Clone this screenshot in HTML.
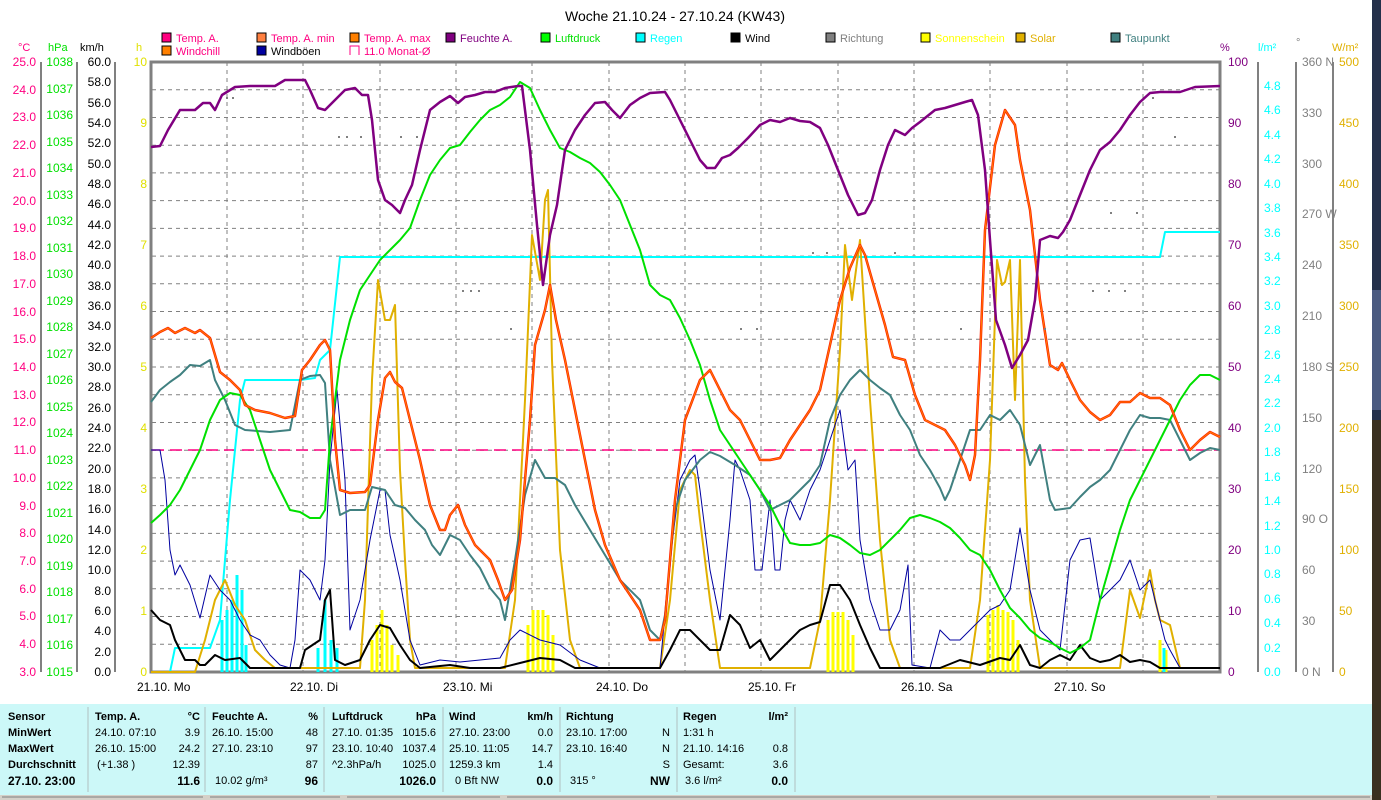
<!DOCTYPE html>
<html><head><meta charset="utf-8"><style>
body{margin:0;width:1381px;height:800px;background:#fff;overflow:hidden;position:relative;font-family:"Liberation Sans",sans-serif}
svg{position:absolute;left:0;top:0}
.t{position:absolute;font-size:11px;white-space:nowrap;line-height:13px}
.b{font-weight:bold}
.r{text-align:right}
</style></head><body>
<svg width="1381" height="800" font-family="Liberation Sans, sans-serif" font-size="12">
<text x="675" y="21" text-anchor="middle" font-size="14">Woche 21.10.24 - 27.10.24 (KW43)</text>
<!-- legend -->
<g font-size="11">
<rect x="162" y="33" width="9" height="9" fill="#ff0080" stroke="#000"/><text x="176" y="42" fill="#ff0080">Temp. A.</text>
<rect x="257" y="33" width="9" height="9" fill="#ff8040" stroke="#000"/><text x="271" y="42" fill="#ff0080">Temp. A. min</text>
<rect x="350" y="33" width="9" height="9" fill="#ff8000" stroke="#000"/><text x="364" y="42" fill="#ff0080">Temp. A. max</text>
<rect x="446" y="33" width="9" height="9" fill="#800080" stroke="#000"/><text x="460" y="42" fill="#800080">Feuchte A.</text>
<rect x="541" y="33" width="9" height="9" fill="#00ff00" stroke="#000"/><text x="555" y="42" fill="#00e000">Luftdruck</text>
<rect x="636" y="33" width="9" height="9" fill="#00ffff" stroke="#000"/><text x="650" y="42" fill="#00ffff">Regen</text>
<rect x="731" y="33" width="9" height="9" fill="#000" stroke="#000"/><text x="745" y="42">Wind</text>
<rect x="826" y="33" width="9" height="9" fill="#808080" stroke="#000"/><text x="840" y="42" fill="#808080">Richtung</text>
<rect x="921" y="33" width="9" height="9" fill="#ffff00" stroke="#000"/><text x="935" y="42" fill="#ffff00">Sonnenschein</text>
<rect x="1016" y="33" width="9" height="9" fill="#e0b000" stroke="#000"/><text x="1030" y="42" fill="#e0b000">Solar</text>
<rect x="1111" y="33" width="9" height="9" fill="#408080" stroke="#000"/><text x="1125" y="42" fill="#408080">Taupunkt</text>
<rect x="162" y="46" width="9" height="9" fill="#ff8000" stroke="#000"/><text x="176" y="55" fill="#ff0080">Windchill</text>
<rect x="257" y="46" width="9" height="9" fill="#0000a0" stroke="#000"/><text x="271" y="55">Windböen</text>
<path d="M350 55V46h9v9" fill="none" stroke="#ff0080"/><text x="364" y="55" fill="#ff0080">11.0 Monat-Ø</text>
</g>
<!-- axis titles -->
<text x="18" y="51" fill="#ff0080" font-size="11">°C</text>
<text x="48" y="51" fill="#00e000" font-size="11">hPa</text>
<text x="80" y="51" font-size="11">km/h</text>
<text x="136" y="51" fill="#e0e000" font-size="11">h</text>
<text x="1220" y="51" fill="#800080" font-size="11">%</text>
<text x="1258" y="51" fill="#00ffff" font-size="11">l/m²</text>
<text x="1296" y="46" fill="#808080" font-size="11">°</text>
<text x="1332" y="51" fill="#e0b000" font-size="11">W/m²</text>
<!-- axis lines -->
<g stroke="#808080" stroke-width="2" fill="none">
<path d="M41 62V672M77 62V672M115 62V672M1258 62V672M1296 62V672M1333 62V672"/>
</g>
<!-- grid -->
<g stroke="#808080" stroke-dasharray="4,4" stroke-width="1">
<path d="M152 89.7H1220M152 117.5H1220M152 145.2H1220M152 172.9H1220M152 200.6H1220M152 228.4H1220M152 256.1H1220M152 283.8H1220M152 311.5H1220M152 339.3H1220M152 367H1220M152 394.7H1220M152 422.5H1220M152 450.2H1220M152 477.9H1220M152 505.6H1220M152 533.4H1220M152 561.1H1220M152 588.8H1220M152 616.5H1220M152 644.3H1220"/>
<path d="M227 62V672M303 62V672M380 62V672M456 62V672M532 62V672M609 62V672M685 62V672M761 62V672M838 62V672M914 62V672M990 62V672M1067 62V672M1143 62V672"/>
</g>
<rect x="151" y="62" width="1069" height="610" fill="none" stroke="#808080" stroke-width="3"/>
<!-- temp labels -->
<g fill="#ff0080" text-anchor="end" font-size="12">
<text x="36" y="66">25.0</text><text x="36" y="94">24.0</text><text x="36" y="121">23.0</text><text x="36" y="149">22.0</text><text x="36" y="177">21.0</text><text x="36" y="205">20.0</text><text x="36" y="232">19.0</text><text x="36" y="260">18.0</text><text x="36" y="288">17.0</text><text x="36" y="316">16.0</text><text x="36" y="343">15.0</text><text x="36" y="371">14.0</text><text x="36" y="399">13.0</text><text x="36" y="426">12.0</text><text x="36" y="454">11.0</text><text x="36" y="482">10.0</text><text x="36" y="510">9.0</text><text x="36" y="537">8.0</text><text x="36" y="565">7.0</text><text x="36" y="593">6.0</text><text x="36" y="620">5.0</text><text x="36" y="648">4.0</text><text x="36" y="676">3.0</text>
</g>
<g fill="#00e000" text-anchor="end" font-size="12">
<text x="73" y="66">1038</text><text x="73" y="93">1037</text><text x="73" y="119">1036</text><text x="73" y="146">1035</text><text x="73" y="172">1034</text><text x="73" y="199">1033</text><text x="73" y="225">1032</text><text x="73" y="252">1031</text><text x="73" y="278">1030</text><text x="73" y="305">1029</text><text x="73" y="331">1028</text><text x="73" y="358">1027</text><text x="73" y="384">1026</text><text x="73" y="411">1025</text><text x="73" y="437">1024</text><text x="73" y="464">1023</text><text x="73" y="490">1022</text><text x="73" y="517">1021</text><text x="73" y="543">1020</text><text x="73" y="570">1019</text><text x="73" y="596">1018</text><text x="73" y="623">1017</text><text x="73" y="649">1016</text><text x="73" y="676">1015</text>
</g>
<g text-anchor="end" font-size="12">
<text x="111" y="66">60.0</text><text x="111" y="86">58.0</text><text x="111" y="107">56.0</text><text x="111" y="127">54.0</text><text x="111" y="147">52.0</text><text x="111" y="168">50.0</text><text x="111" y="188">48.0</text><text x="111" y="208">46.0</text><text x="111" y="229">44.0</text><text x="111" y="249">42.0</text><text x="111" y="269">40.0</text><text x="111" y="290">38.0</text><text x="111" y="310">36.0</text><text x="111" y="330">34.0</text><text x="111" y="351">32.0</text><text x="111" y="371">30.0</text><text x="111" y="391">28.0</text><text x="111" y="412">26.0</text><text x="111" y="432">24.0</text><text x="111" y="452">22.0</text><text x="111" y="473">20.0</text><text x="111" y="493">18.0</text><text x="111" y="513">16.0</text><text x="111" y="534">14.0</text><text x="111" y="554">12.0</text><text x="111" y="574">10.0</text><text x="111" y="595">8.0</text><text x="111" y="615">6.0</text><text x="111" y="635">4.0</text><text x="111" y="656">2.0</text><text x="111" y="676">0.0</text>
</g>
<g fill="#e0e000" text-anchor="end" font-size="12">
<text x="147" y="66">10</text><text x="147" y="127">9</text><text x="147" y="188">8</text><text x="147" y="249">7</text><text x="147" y="310">6</text><text x="147" y="371">5</text><text x="147" y="432">4</text><text x="147" y="493">3</text><text x="147" y="554">2</text><text x="147" y="615">1</text><text x="147" y="676">0</text>
</g>
<g fill="#800080" font-size="12">
<text x="1228" y="66">100</text><text x="1228" y="127">90</text><text x="1228" y="188">80</text><text x="1228" y="249">70</text><text x="1228" y="310">60</text><text x="1228" y="371">50</text><text x="1228" y="432">40</text><text x="1228" y="493">30</text><text x="1228" y="554">20</text><text x="1228" y="615">10</text><text x="1228" y="676">0</text>
</g>
<g fill="#00ffff" font-size="12">
<text x="1264" y="90">4.8</text><text x="1264" y="114">4.6</text><text x="1264" y="139">4.4</text><text x="1264" y="163">4.2</text><text x="1264" y="188">4.0</text><text x="1264" y="212">3.8</text><text x="1264" y="237">3.6</text><text x="1264" y="261">3.4</text><text x="1264" y="285">3.2</text><text x="1264" y="310">3.0</text><text x="1264" y="334">2.8</text><text x="1264" y="359">2.6</text><text x="1264" y="383">2.4</text><text x="1264" y="407">2.2</text><text x="1264" y="432">2.0</text><text x="1264" y="456">1.8</text><text x="1264" y="481">1.6</text><text x="1264" y="505">1.4</text><text x="1264" y="530">1.2</text><text x="1264" y="554">1.0</text><text x="1264" y="578">0.8</text><text x="1264" y="603">0.6</text><text x="1264" y="627">0.4</text><text x="1264" y="652">0.2</text><text x="1264" y="676">0.0</text>
</g>
<g fill="#808080" font-size="12">
<text x="1302" y="66">360 N</text><text x="1302" y="117">330</text><text x="1302" y="168">300</text><text x="1302" y="218">270 W</text><text x="1302" y="269">240</text><text x="1302" y="320">210</text><text x="1302" y="371">180 S</text><text x="1302" y="422">150</text><text x="1302" y="473">120</text><text x="1302" y="523">90  O</text><text x="1302" y="574">60</text><text x="1302" y="625">30</text><text x="1302" y="676">0    N</text>
</g>
<g fill="#e0b000" font-size="12">
<text x="1339" y="66">500</text><text x="1339" y="127">450</text><text x="1339" y="188">400</text><text x="1339" y="249">350</text><text x="1339" y="310">300</text><text x="1339" y="371">250</text><text x="1339" y="432">200</text><text x="1339" y="493">150</text><text x="1339" y="554">100</text><text x="1339" y="615">50</text><text x="1339" y="676">0</text>
</g>
<!-- x labels -->
<g font-size="12">
<text x="137" y="691">21.10.  Mo</text><text x="290" y="691">22.10.  Di</text><text x="443" y="691">23.10.  Mi</text><text x="596" y="691">24.10.  Do</text><text x="748" y="691">25.10.  Fr</text><text x="901" y="691">26.10.  Sa</text><text x="1054" y="691">27.10.  So</text>
</g>
<!-- bars -->
<g stroke="#ffff00" stroke-width="3">
<path d="M372 672V640M377 672V625M382 672V610M387 672V625M392 672V645M398 672V655M528 672V625M533 672V610M538 672V610M543 672V610M548 672V615M553 672V635M828 672V620M833 672V612M838 672V612M843 672V612M848 672V620M853 672V635M988 672V615M993 672V610M998 672V605M1003 672V610M1008 672V612M1013 672V620M1018 672V640M1160 672V640M1166 672V650"/>
</g>
<g stroke="#00ffff" stroke-width="3">
<path d="M222 672V620M227 672V610M232 672V600M237 672V575M242 672V590M246 672V645M318 672V648M325 672V600M331 672V640M337 672V648M1164 672V648"/>
</g>
<line x1="152" y1="450" x2="1220" y2="450" stroke="#ff0080" stroke-dasharray="12,6" stroke-width="1.5"/>
<!-- curves -->
<g fill="none" stroke-linejoin="round">
<polyline stroke="#00ffff" stroke-width="2" points="151,672 170,672 175,648 210,648 220,620 230,500 240,400 245,380 300,380 315,378 320,360 330,350 340,257 1160,257 1165,232 1220,232"/>
<polyline stroke="#e0b000" stroke-width="2" points="151,672 195,672 205,640 215,600 225,580 235,605 245,620 255,650 265,660 275,668 360,668 365,600 372,380 378,280 385,320 390,320 395,305 400,470 405,560 410,640 415,668 505,668 515,600 525,400 532,235 540,280 545,200 548,190 552,360 560,550 570,640 580,668 660,668 670,600 680,490 690,470 695,475 700,520 710,600 720,668 810,668 820,620 830,500 840,350 845,245 852,300 860,240 870,400 880,540 890,640 900,668 970,668 980,600 990,460 997,260 1002,285 1005,282 1010,260 1015,400 1020,260 1025,480 1030,600 1040,668 1120,668 1130,590 1140,618 1150,570 1155,600 1160,620 1170,625 1180,668 1220,668"/>
<polyline stroke="#0000a0" stroke-width="1" points="151,450 160,450 165,480 170,550 175,575 180,565 190,585 200,618 210,575 220,590 230,600 240,620 250,635 260,640 270,655 280,665 290,668 295,640 300,570 310,580 320,600 325,560 330,460 337,390 345,480 350,630 360,600 370,540 380,490 385,490 390,535 400,580 410,640 420,665 440,660 460,662 480,660 500,658 510,640 520,630 540,640 560,645 580,660 600,668 660,668 670,560 680,480 690,460 695,455 700,490 710,570 720,620 730,520 735,460 740,470 750,500 755,570 762,570 770,500 775,570 780,570 785,520 790,500 800,520 810,490 815,480 820,470 830,440 840,410 848,470 855,460 860,540 870,600 880,630 890,630 900,610 908,565 912,665 930,668 940,630 950,640 960,640 970,630 980,620 990,610 1000,605 1010,590 1020,528 1030,590 1040,630 1050,640 1060,650 1070,560 1080,540 1090,538 1100,600 1110,590 1120,580 1130,560 1140,590 1150,580 1160,620 1165,640 1170,650 1180,668 1220,668"/>
<polyline stroke="#000" stroke-width="2" points="151,610 160,620 170,625 175,640 185,660 195,660 200,665 205,665 215,655 225,660 240,658 250,668 300,668 305,650 320,640 325,600 330,590 335,660 345,665 360,660 370,640 380,625 390,628 400,645 410,660 420,668 450,665 470,668 500,668 520,663 540,658 560,660 575,668 660,668 670,650 680,630 690,630 700,640 710,650 720,650 730,615 740,625 750,648 760,640 770,660 780,650 790,640 800,630 810,625 820,622 830,585 840,585 850,600 860,625 870,648 880,668 940,668 960,660 980,665 1000,658 1010,660 1020,645 1030,665 1040,668 1050,660 1060,655 1070,660 1080,645 1090,658 1100,662 1110,660 1120,655 1130,662 1140,660 1150,662 1160,668 1220,668"/>
<polyline stroke="#408080" stroke-width="2" points="151,402 160,390 170,382 180,375 190,365 200,366 210,360 215,380 225,400 235,425 245,430 270,432 290,430 300,380 310,376 320,375 325,383 330,460 340,515 350,510 365,510 372,487 385,490 395,505 405,508 415,520 425,530 432,545 440,555 450,535 460,540 470,555 480,568 490,588 500,600 505,620 515,560 525,495 535,460 545,478 555,478 565,485 575,505 590,530 605,555 620,580 640,600 650,630 660,640 665,615 675,510 685,480 700,460 710,452 720,456 735,465 750,475 760,490 770,510 780,505 790,500 800,490 810,480 820,465 830,420 840,395 850,380 860,370 870,380 880,388 890,395 900,415 910,430 920,455 930,470 940,488 945,500 950,490 960,460 970,430 980,430 990,415 1000,420 1010,410 1020,425 1030,465 1040,445 1050,500 1055,510 1070,508 1080,497 1090,487 1100,480 1110,470 1120,450 1130,430 1140,415 1150,418 1160,418 1170,420 1180,440 1190,460 1200,453 1210,448 1220,450"/>
<polyline stroke="#00e000" stroke-width="2" points="151,523 160,515 170,505 180,490 190,470 200,450 210,420 220,400 230,393 240,395 250,410 260,440 270,470 280,490 290,510 300,512 310,518 320,518 325,510 330,440 340,360 350,320 360,290 370,275 380,260 390,250 400,240 410,228 420,200 430,175 440,160 450,148 460,145 470,132 480,120 490,110 500,105 510,97 520,82 530,88 540,110 550,130 560,148 570,152 580,158 590,163 600,172 610,185 620,200 630,225 640,250 650,285 660,295 670,300 680,318 690,340 700,365 710,400 720,430 730,445 740,460 750,475 760,490 770,505 780,525 790,543 800,545 810,545 820,543 830,535 840,538 850,545 860,553 870,555 880,550 890,540 900,530 910,518 920,515 930,518 940,522 950,528 960,538 970,550 980,555 990,570 1000,590 1010,608 1020,618 1030,630 1040,638 1050,642 1060,648 1070,653 1080,648 1090,640 1100,600 1110,565 1120,530 1130,500 1140,480 1150,460 1160,440 1170,420 1180,400 1190,385 1200,375 1210,375 1220,380"/>
<polyline stroke="#ff2000" stroke-width="2.5" points="151,338 160,332 168,328 175,333 185,328 195,333 200,330 210,338 220,372 230,380 240,390 245,405 255,410 270,413 285,418 295,416 302,370 310,360 320,345 325,340 330,350 335,440 340,490 350,493 365,492 370,485 378,420 385,378 390,372 395,382 402,388 410,420 420,460 430,505 440,530 445,530 450,515 458,505 465,525 475,545 490,560 498,580 505,600 512,590 520,540 530,420 535,345 545,310 550,285 556,320 565,360 575,410 585,460 595,510 605,545 620,580 640,610 650,640 660,640 665,620 675,500 685,420 700,380 710,370 720,390 730,410 740,420 750,440 760,460 770,460 780,458 790,440 800,425 810,410 820,390 830,345 840,300 850,268 860,245 865,255 875,290 885,325 893,357 905,360 915,395 925,420 935,425 945,430 955,445 965,465 970,480 975,455 980,360 985,230 995,145 1005,110 1015,125 1020,160 1030,210 1040,300 1050,365 1058,370 1062,363 1070,380 1080,400 1090,412 1100,420 1110,415 1120,402 1130,402 1140,393 1150,398 1160,398 1170,405 1180,430 1190,450 1200,440 1210,432 1220,437"/>
<polyline stroke="#ff8000" stroke-width="1" points="151,338 160,332 168,328 175,333 185,328 195,333 200,330 210,338 220,372 230,380 240,390 245,405 255,410 270,413 285,418 295,416 302,370 310,360 320,345 325,340 330,350 335,440 340,490 350,493 365,492 370,485 378,420 385,378 390,372 395,382 402,388 410,420 420,460 430,505 440,530 445,530 450,515 458,505 465,525 475,545 490,560 498,580 505,600 512,590 520,540 530,420 535,345 545,310 550,285 556,320 565,360 575,410 585,460 595,510 605,545 620,580 640,610 650,640 660,640 665,620 675,500 685,420 700,380 710,370 720,390 730,410 740,420 750,440 760,460 770,460 780,458 790,440 800,425 810,410 820,390 830,345 840,300 850,268 860,245 865,255 875,290 885,325 893,357 905,360 915,395 925,420 935,425 945,430 955,445 965,465 970,480 975,455 980,360 985,230 995,145 1005,110 1015,125 1020,160 1030,210 1040,300 1050,365 1058,370 1062,363 1070,380 1080,400 1090,412 1100,420 1110,415 1120,402 1130,402 1140,393 1150,398 1160,398 1170,405 1180,430 1190,450 1200,440 1210,432 1220,437"/>
<polyline stroke="#800080" stroke-width="2.5" points="151,147 160,146 168,130 180,110 195,110 203,103 210,103 215,110 222,95 235,87 250,86 275,86 285,80 305,80 310,90 318,108 325,110 335,100 345,90 355,88 362,95 368,95 372,120 378,180 385,200 392,205 400,213 405,200 412,185 420,150 430,110 440,102 450,96 458,103 465,97 475,95 485,92 495,92 505,88 518,86 522,86 530,150 537,225 543,285 550,235 557,205 565,150 575,130 585,115 595,103 605,102 612,110 620,118 630,105 640,98 650,93 665,92 670,100 680,120 690,140 700,160 707,168 715,168 722,158 730,155 738,148 748,138 760,125 770,120 780,122 790,118 800,121 810,122 820,128 828,145 838,170 848,195 858,215 865,213 872,200 880,170 888,145 895,130 905,135 912,128 920,122 925,118 935,110 945,108 955,105 965,102 972,100 978,115 985,170 990,240 996,320 1005,345 1012,368 1020,355 1028,340 1035,300 1040,240 1050,236 1058,238 1063,232 1070,220 1080,195 1090,170 1100,150 1110,142 1120,130 1130,115 1140,102 1150,93 1160,92 1180,92 1195,87 1220,86"/>
</g>
<!-- direction dots -->
<g fill="#808080">
<rect x="226" y="97" width="2" height="2"/><rect x="232" y="97" width="2" height="2"/><rect x="338" y="136" width="2" height="2"/><rect x="346" y="136" width="2" height="2"/><rect x="360" y="136" width="2" height="2"/><rect x="400" y="136" width="2" height="2"/><rect x="416" y="136" width="2" height="2"/><rect x="462" y="290" width="2" height="2"/><rect x="470" y="290" width="2" height="2"/><rect x="478" y="290" width="2" height="2"/><rect x="510" y="328" width="2" height="2"/><rect x="740" y="328" width="2" height="2"/><rect x="756" y="328" width="2" height="2"/><rect x="812" y="252" width="2" height="2"/><rect x="826" y="252" width="2" height="2"/><rect x="894" y="252" width="2" height="2"/><rect x="1092" y="290" width="2" height="2"/><rect x="1108" y="290" width="2" height="2"/><rect x="1124" y="290" width="2" height="2"/><rect x="1152" y="97" width="2" height="2"/><rect x="1110" y="212" width="2" height="2"/><rect x="1136" y="212" width="2" height="2"/><rect x="1174" y="136" width="2" height="2"/><rect x="960" y="328" width="2" height="2"/><rect x="1044" y="328" width="2" height="2"/>
</g>
<!-- table bg -->
<rect x="0" y="704" width="1372" height="92" fill="#ccf8f8"/>
<g stroke="#b0c0c0" stroke-width="1"><path d="M88 707V792M205 707V792M324 707V792M443 707V792M560 707V792M677 707V792M795 707V792"/></g>
<rect x="0" y="795" width="1372" height="5" fill="#d4d0c8"/>
<path d="M2 797H203M210 797H340M347 797H500M507 797H1210M1217 797H1370" stroke="#808080" stroke-width="1"/>
<rect x="1372" y="0" width="9" height="800" fill="#24304a"/>
<rect x="1372" y="290" width="9" height="120" fill="#4a5a80"/>
<rect x="1372" y="420" width="9" height="380" fill="#3a3020"/>
</svg>
<div class="t b" style="left:8px;top:711px">Sensor</div>
<div class="t b" style="left:8px;top:727px">MinWert</div>
<div class="t b" style="left:8px;top:743px">MaxWert</div>
<div class="t b" style="left:8px;top:759px">Durchschnitt</div>
<div class="t b" style="left:8px;top:775px;font-size:12px">27.10. 23:00</div>

<div class="t b" style="left:95px;top:711px">Temp. A.</div><div class="t b r" style="left:150px;width:50px;top:711px">°C</div>
<div class="t" style="left:95px;top:727px">24.10.  07:10</div><div class="t r" style="left:150px;width:50px;top:727px">3.9</div>
<div class="t" style="left:95px;top:743px">26.10.  15:00</div><div class="t r" style="left:150px;width:50px;top:743px">24.2</div>
<div class="t" style="left:97px;top:759px">(+1.38 )</div><div class="t r" style="left:150px;width:50px;top:759px">12.39</div>
<div class="t b r" style="left:150px;width:50px;top:775px;font-size:12px">11.6</div>

<div class="t b" style="left:212px;top:711px">Feuchte A.</div><div class="t b r" style="left:268px;width:50px;top:711px">%</div>
<div class="t" style="left:212px;top:727px">26.10.  15:00</div><div class="t r" style="left:268px;width:50px;top:727px">48</div>
<div class="t" style="left:212px;top:743px">27.10.  23:10</div><div class="t r" style="left:268px;width:50px;top:743px">97</div>
<div class="t r" style="left:268px;width:50px;top:759px">87</div>
<div class="t" style="left:215px;top:775px">10.02 g/m³</div><div class="t b r" style="left:268px;width:50px;top:775px;font-size:12px">96</div>

<div class="t b" style="left:332px;top:711px">Luftdruck</div><div class="t b r" style="left:386px;width:50px;top:711px">hPa</div>
<div class="t" style="left:332px;top:727px">27.10.  01:35</div><div class="t r" style="left:386px;width:50px;top:727px">1015.6</div>
<div class="t" style="left:332px;top:743px">23.10.  10:40</div><div class="t r" style="left:386px;width:50px;top:743px">1037.4</div>
<div class="t" style="left:332px;top:759px">^2.3hPa/h</div><div class="t r" style="left:386px;width:50px;top:759px">1025.0</div>
<div class="t b r" style="left:376px;width:60px;top:775px;font-size:12px">1026.0</div>

<div class="t b" style="left:449px;top:711px">Wind</div><div class="t b r" style="left:503px;width:50px;top:711px">km/h</div>
<div class="t" style="left:449px;top:727px">27.10.  23:00</div><div class="t r" style="left:503px;width:50px;top:727px">0.0</div>
<div class="t" style="left:449px;top:743px">25.10.  11:05</div><div class="t r" style="left:503px;width:50px;top:743px">14.7</div>
<div class="t" style="left:449px;top:759px">1259.3 km</div><div class="t r" style="left:503px;width:50px;top:759px">1.4</div>
<div class="t" style="left:455px;top:775px">0 Bft NW</div><div class="t b r" style="left:503px;width:50px;top:775px;font-size:12px">0.0</div>

<div class="t b" style="left:566px;top:711px">Richtung</div>
<div class="t" style="left:566px;top:727px">23.10.  17:00</div><div class="t r" style="left:620px;width:50px;top:727px">N</div>
<div class="t" style="left:566px;top:743px">23.10.  16:40</div><div class="t r" style="left:620px;width:50px;top:743px">N</div>
<div class="t r" style="left:620px;width:50px;top:759px">S</div>
<div class="t" style="left:570px;top:775px">315 °</div><div class="t b r" style="left:620px;width:50px;top:775px;font-size:12px">NW</div>

<div class="t b" style="left:683px;top:711px">Regen</div><div class="t b r" style="left:738px;width:50px;top:711px">l/m²</div>
<div class="t" style="left:683px;top:727px">1:31 h</div>
<div class="t" style="left:683px;top:743px">21.10.  14:16</div><div class="t r" style="left:738px;width:50px;top:743px">0.8</div>
<div class="t" style="left:683px;top:759px">Gesamt:</div><div class="t r" style="left:738px;width:50px;top:759px">3.6</div>
<div class="t" style="left:685px;top:775px">3.6 l/m²</div><div class="t b r" style="left:738px;width:50px;top:775px;font-size:12px">0.0</div>
</body></html>
